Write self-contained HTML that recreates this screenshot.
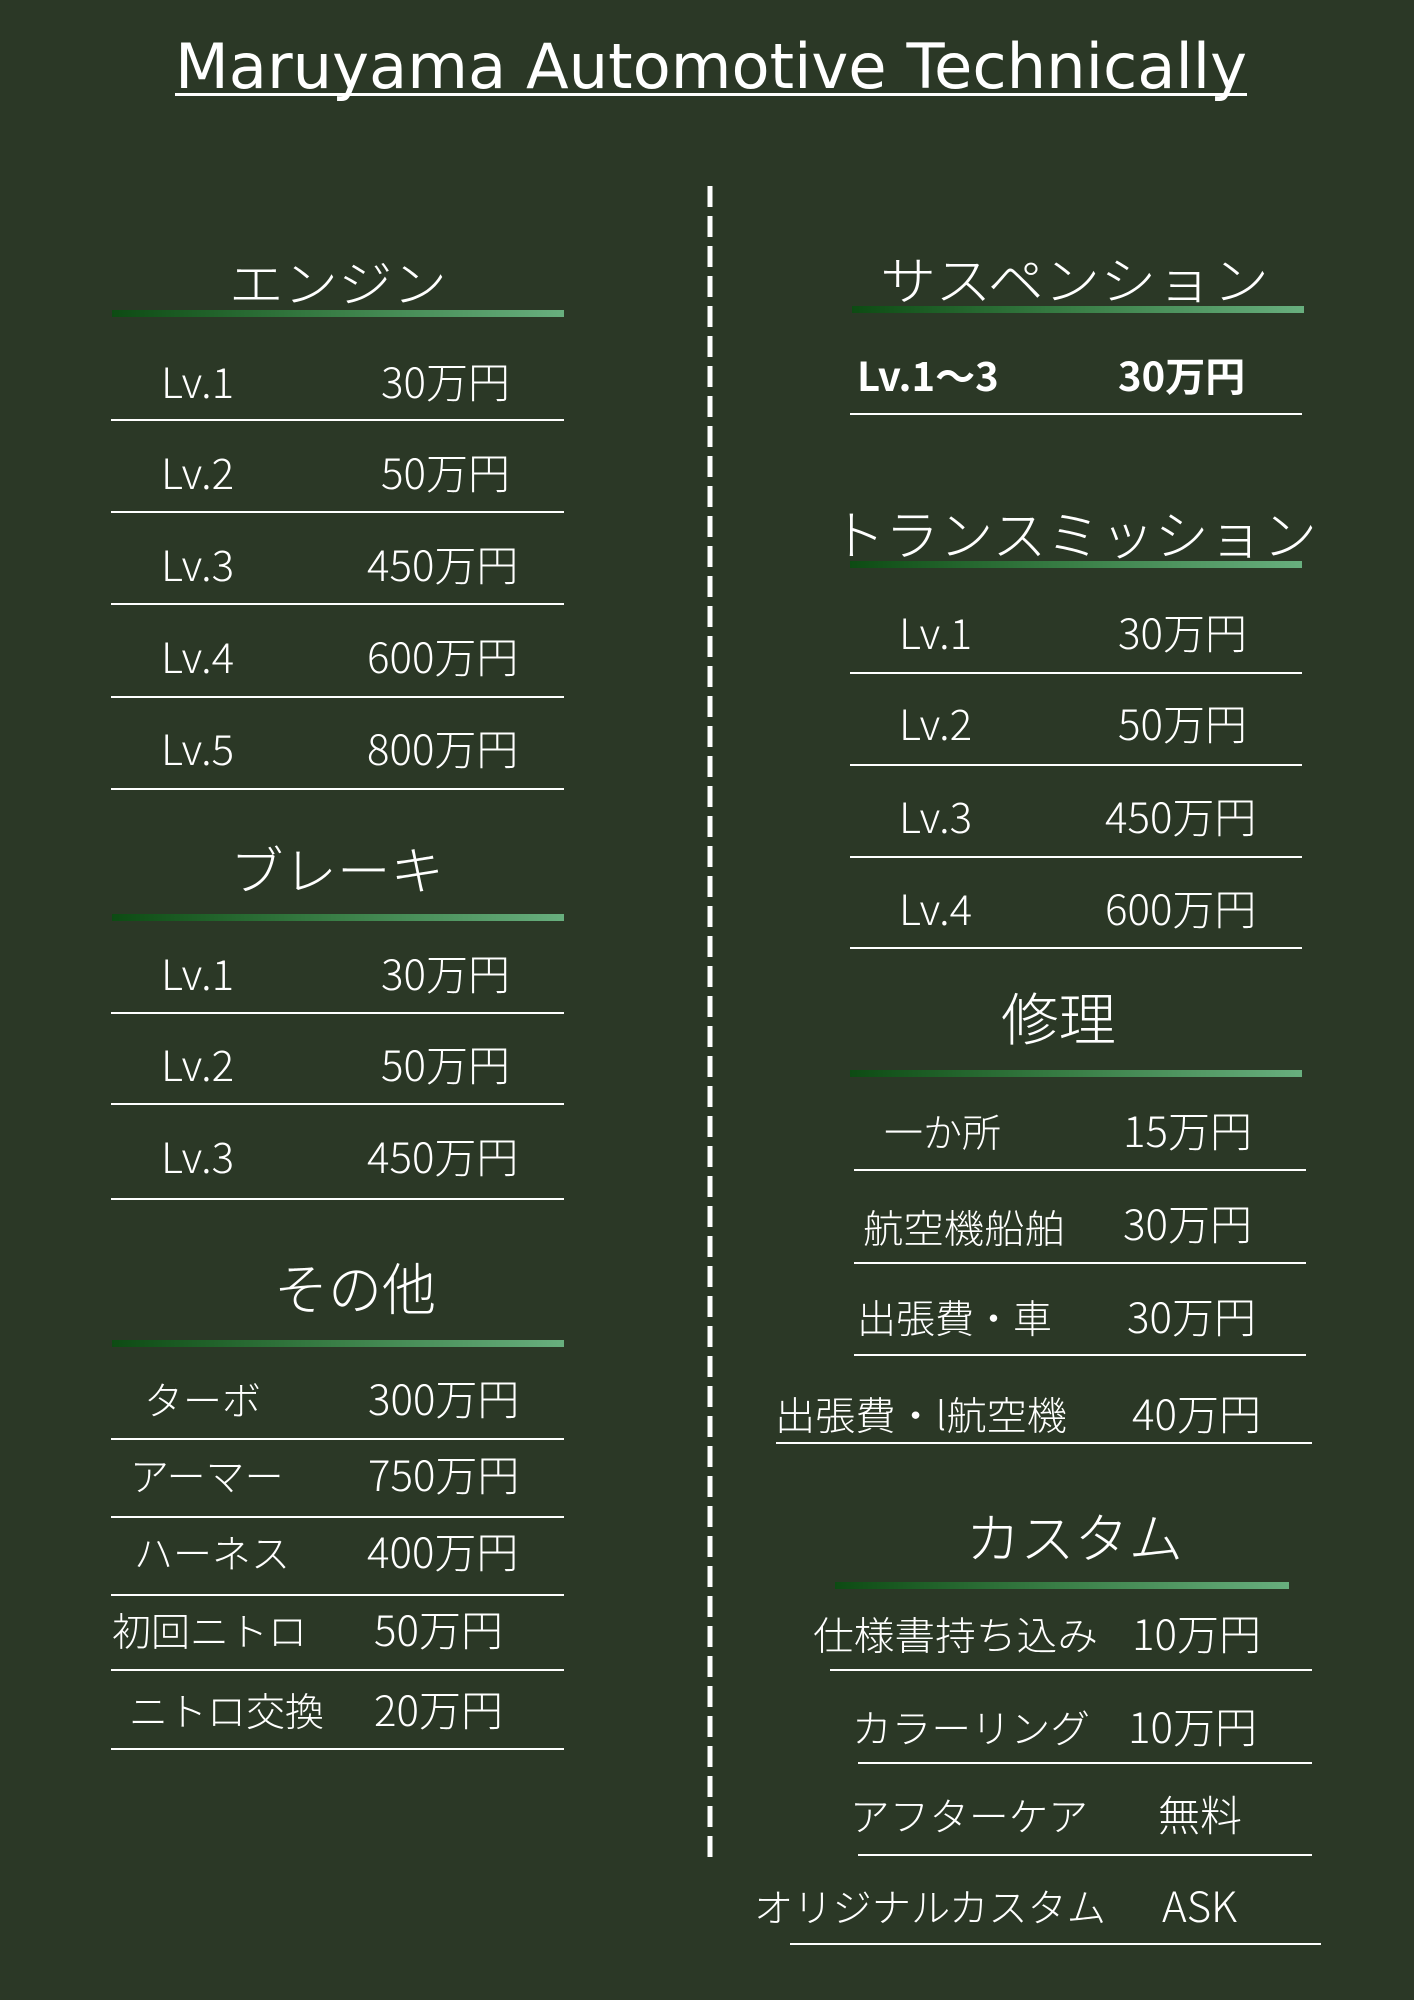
<!DOCTYPE html>
<html><head><meta charset="utf-8"><style>
html,body{margin:0;padding:0;background:#2b3826;}
svg{display:block}
text{font-family:"Noto Sans CJK JP","Liberation Sans",sans-serif;font-weight:300;fill:#fff;}
</style></head><body>
<svg width="1414" height="2000" viewBox="0 0 1414 2000" xmlns="http://www.w3.org/2000/svg">
<defs>
<linearGradient id="g" x1="0" x2="1" y1="0" y2="0"><stop offset="0" stop-color="#0d4b13"/><stop offset="0.5" stop-color="#3a7f47"/><stop offset="1" stop-color="#68af7e"/></linearGradient>
</defs>
<rect width="1414" height="2000" fill="#2b3826"/>
<text x="175" y="88" font-size="62" textLength="1072" lengthAdjust="spacingAndGlyphs" style="font-family:'DejaVu Sans',sans-serif;font-weight:400">Maruyama Automotive Technically</text>
<rect x="175" y="93" width="1072" height="3" fill="#fff"/>
<line x1="710" y1="186" x2="710" y2="1858" stroke="#fff" stroke-width="5" stroke-dasharray="21 9"/>

<g fill="url(#g)">
<rect x="112" y="310" width="452" height="7"/>
<rect x="112" y="914" width="452" height="7"/>
<rect x="112" y="1340" width="452" height="7"/>
<rect x="852" y="306" width="452" height="7"/>
<rect x="850" y="561" width="452" height="7"/>
<rect x="850" y="1070" width="452" height="7"/>
<rect x="835" y="1582" width="454" height="7"/>
</g>
<g stroke="#fff" stroke-width="2">
<line x1="111" y1="420" x2="564" y2="420"/>
<line x1="111" y1="512" x2="564" y2="512"/>
<line x1="111" y1="604" x2="564" y2="604"/>
<line x1="111" y1="697" x2="564" y2="697"/>
<line x1="111" y1="789" x2="564" y2="789"/>
<line x1="111" y1="1013" x2="564" y2="1013"/>
<line x1="111" y1="1104" x2="564" y2="1104"/>
<line x1="111" y1="1199" x2="564" y2="1199"/>
<line x1="111" y1="1439" x2="564" y2="1439"/>
<line x1="111" y1="1517" x2="564" y2="1517"/>
<line x1="111" y1="1595" x2="564" y2="1595"/>
<line x1="111" y1="1670" x2="564" y2="1670"/>
<line x1="111" y1="1749" x2="564" y2="1749"/>
<line x1="850" y1="414" x2="1302" y2="414"/>
<line x1="850" y1="673" x2="1302" y2="673"/>
<line x1="850" y1="765" x2="1302" y2="765"/>
<line x1="850" y1="857" x2="1302" y2="857"/>
<line x1="850" y1="948" x2="1302" y2="948"/>
<line x1="854" y1="1170" x2="1306" y2="1170"/>
<line x1="854" y1="1263" x2="1306" y2="1263"/>
<line x1="854" y1="1355" x2="1306" y2="1355"/>
<line x1="776" y1="1443" x2="1312" y2="1443"/>
<line x1="830" y1="1670" x2="1312" y2="1670"/>
<line x1="858" y1="1763" x2="1312" y2="1763"/>
<line x1="858" y1="1855" x2="1312" y2="1855"/>
<line x1="790" y1="1944" x2="1321" y2="1944"/>
</g>

<text x="229" y="302" font-size="50" textLength="218" lengthAdjust="spacingAndGlyphs">エンジン</text>
<text x="230" y="890" font-size="52" textLength="214" lengthAdjust="spacingAndGlyphs">ブレーキ</text>
<text x="274" y="1310" font-size="56" textLength="162" lengthAdjust="spacingAndGlyphs">その他</text>
<text x="880" y="300" font-size="52" textLength="389" lengthAdjust="spacingAndGlyphs">サスペンション</text>
<text x="831" y="555" font-size="54" textLength="486" lengthAdjust="spacingAndGlyphs">トランスミッション</text>
<text x="1001" y="1040" font-size="57" textLength="115" lengthAdjust="spacingAndGlyphs">修理</text>
<text x="966" y="1558" font-size="54" textLength="217" lengthAdjust="spacingAndGlyphs">カスタム</text>

<g font-size="42">
<text x="161" y="398">Lv.1</text><text x="381" y="398">30万円</text>
<text x="161" y="489">Lv.2</text><text x="381" y="489">50万円</text>
<text x="161" y="581">Lv.3</text><text x="367" y="581">450万円</text>
<text x="161" y="673">Lv.4</text><text x="367" y="673">600万円</text>
<text x="161" y="765">Lv.5</text><text x="367" y="765">800万円</text>
<text x="161" y="990">Lv.1</text><text x="381" y="990">30万円</text>
<text x="161" y="1081">Lv.2</text><text x="381" y="1081">50万円</text>
<text x="161" y="1173">Lv.3</text><text x="367" y="1173">450万円</text>
<text x="368" y="1415">300万円</text>
<text x="368" y="1491">750万円</text>
<text x="367" y="1568">400万円</text>
<text x="374" y="1646">50万円</text>
<text x="374" y="1726">20万円</text>
<text x="857" y="391" style="font-weight:700" font-size="40">Lv.1～3</text>
<text x="1118" y="391" style="font-weight:700" font-size="40">30万円</text>
<text x="899" y="649">Lv.1</text><text x="1118" y="649">30万円</text>
<text x="899" y="740">Lv.2</text><text x="1118" y="740">50万円</text>
<text x="899" y="833">Lv.3</text><text x="1105" y="833">450万円</text>
<text x="899" y="925">Lv.4</text><text x="1105" y="925">600万円</text>
<text x="1123" y="1147">15万円</text>
<text x="1123" y="1240">30万円</text>
<text x="1127" y="1333">30万円</text>
<text x="1132" y="1430">40万円</text>
<text x="1132" y="1650">10万円</text>
<text x="1128" y="1743">10万円</text>
<text x="1158" y="1831">無料</text>
<text x="1162" y="1922">ASK</text>
</g>
<g font-size="39">
<text x="144" y="1415">ターボ</text>
<text x="130" y="1491">アーマー</text>
<text x="134" y="1568">ハーネス</text>
<text x="112" y="1646">初回ニトロ</text>
<text x="129" y="1726">ニトロ交換</text>
<text x="884" y="1147">一か所</text>
<text x="863" y="1243" textLength="202" lengthAdjust="spacingAndGlyphs">航空機船舶</text>
<text x="857" y="1333">出張費・車</text>
<text x="775" y="1430" textLength="292" lengthAdjust="spacingAndGlyphs">出張費・l航空機</text>
<text x="813" y="1650" textLength="285" lengthAdjust="spacingAndGlyphs">仕様書持ち込み</text>
<text x="852" y="1743" textLength="238" lengthAdjust="spacingAndGlyphs">カラーリング</text>
<text x="850" y="1831" textLength="238" lengthAdjust="spacingAndGlyphs">アフターケア</text>
<text x="754" y="1922" textLength="352" lengthAdjust="spacingAndGlyphs">オリジナルカスタム</text>
</g>
</svg>
</body></html>
